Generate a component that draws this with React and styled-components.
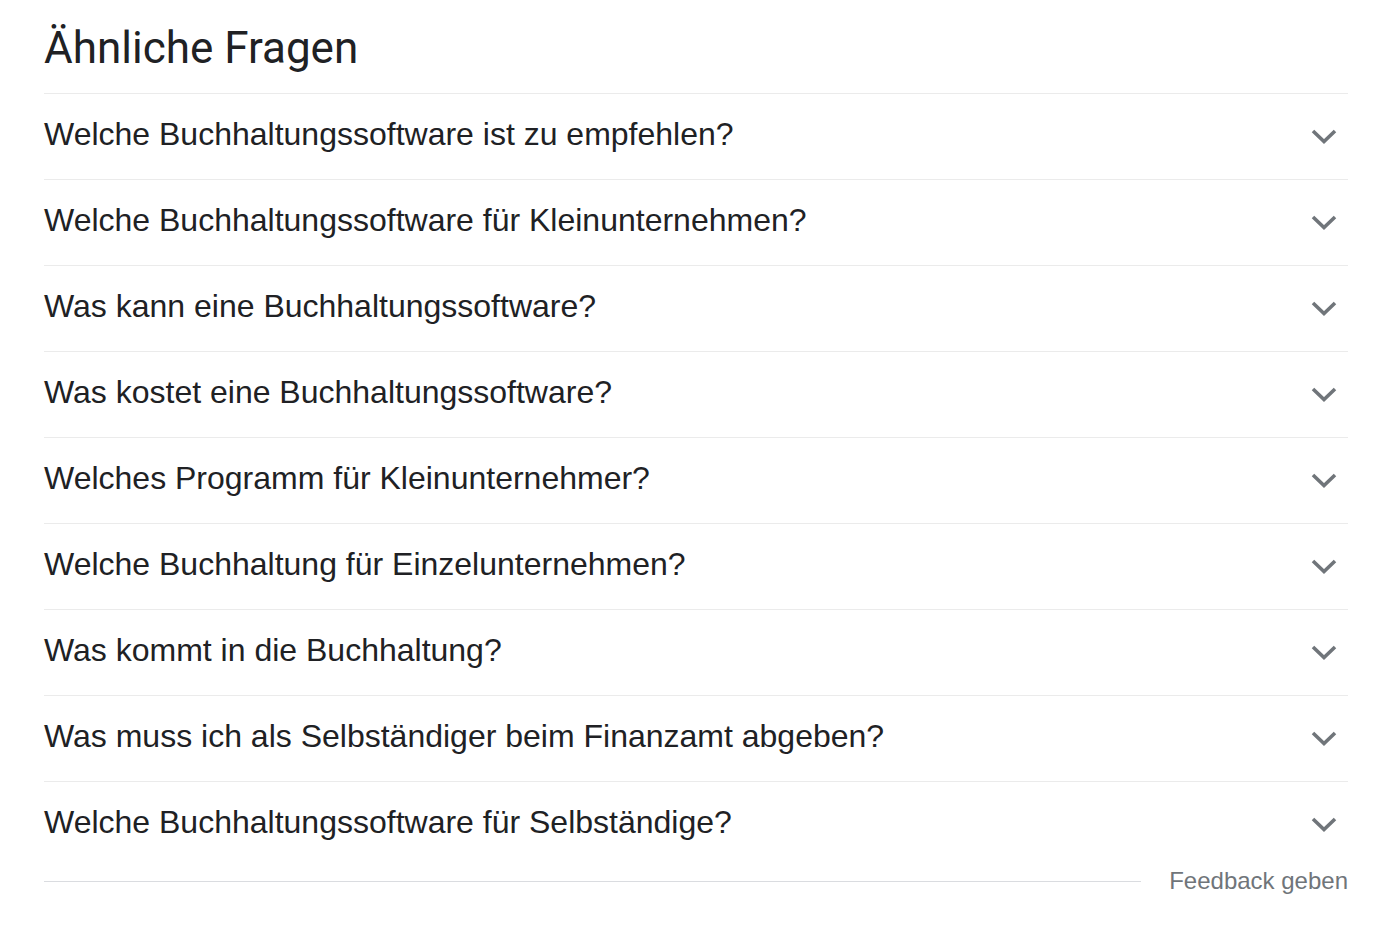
import React from "react";
import styled, { createGlobalStyle } from "styled-components";

const Global = createGlobalStyle`
  html, body { margin: 0; padding: 0; background: #fff; }
  body { font-family: "Liberation Sans", Arial, sans-serif; }
`;

const Page = styled.div`
  width: 1304px;
  padding: 24px 0 0 44px;
`;

const Title = styled.h2`
  margin: 0;
  font-family: Roboto, "Open Sans", sans-serif;
  font-weight: 400;
  font-size: 44px;
  line-height: 48px;
  color: #202124;
  padding-bottom: 21px;
`;

const List = styled.div`
  display: flex;
  flex-direction: column;
`;

const Row = styled.div`
  display: flex;
  align-items: center;
  justify-content: space-between;
  box-sizing: border-box;
  height: 86px;
  padding-bottom: 5px;
  border-top: 1px solid #ebebeb;
`;

const Question = styled.span`
  font-family: "Liberation Sans", Arial, sans-serif;
  font-size: 32px;
  color: #202124;
  line-height: 34px;
`;

const ChevronBox = styled.span`
  display: flex;
  width: 48px;
  justify-content: center;
  margin-top: 4px;
`;

const Footer = styled.div`
  display: flex;
  align-items: center;
  gap: 28px;
`;

const FooterLine = styled.div`
  flex: 1;
  height: 1px;
  background: #dadce0;
`;

const FeedbackLink = styled.span`
  font-family: "Liberation Sans", Arial, sans-serif;
  font-size: 24px;
  color: #70757a;
  line-height: 28px;
`;

const Chevron = () => (
  <svg width="26" height="16" viewBox="0 0 26 16">
    <polyline
      points="2,3 13,13.5 24,3"
      fill="none"
      stroke="#70757a"
      strokeWidth="3.6"
      strokeLinecap="butt"
      strokeLinejoin="miter"
    />
  </svg>
);

const questions = [
  "Welche Buchhaltungssoftware ist zu empfehlen?",
  "Welche Buchhaltungssoftware für Kleinunternehmen?",
  "Was kann eine Buchhaltungssoftware?",
  "Was kostet eine Buchhaltungssoftware?",
  "Welches Programm für Kleinunternehmer?",
  "Welche Buchhaltung für Einzelunternehmen?",
  "Was kommt in die Buchhaltung?",
  "Was muss ich als Selbständiger beim Finanzamt abgeben?",
  "Welche Buchhaltungssoftware für Selbständige?",
];

export default function App() {
  return (
    <>
      <Global />
      <Page>
        <Title>Ähnliche Fragen</Title>
        <List>
          {questions.map((q) => (
            <Row key={q}>
              <Question>{q}</Question>
              <ChevronBox>
                <Chevron />
              </ChevronBox>
            </Row>
          ))}
        </List>
        <Footer>
          <FooterLine />
          <FeedbackLink>Feedback geben</FeedbackLink>
        </Footer>
      </Page>
    </>
  );
}
